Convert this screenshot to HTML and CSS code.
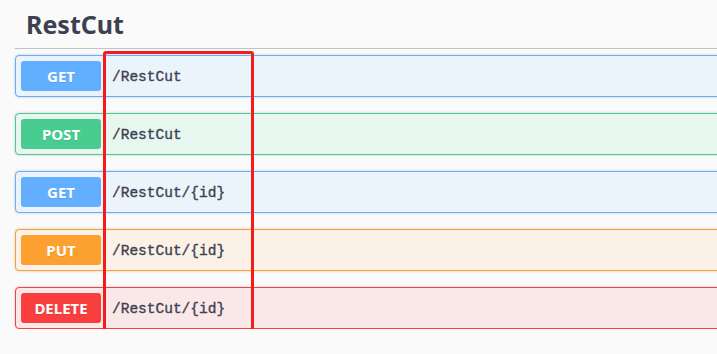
FILE: index.html
```html
<!DOCTYPE html>
<html lang="en">
<head>
  <meta charset="UTF-8">
  <meta name="viewport" content="width=device-width, initial-scale=1.0">
  <title>RestCut</title>
  <link rel="stylesheet" href="styles.css">
</head>
<body>
  <div class="swagger">
    <h3 class="tag">RestCut</h3>
    <div class="ops">
      <div class="op op-get">
        <span class="method">GET</span>
        <span class="path">/RestCut</span>
      </div>
      <div class="op op-post">
        <span class="method">POST</span>
        <span class="path">/RestCut</span>
      </div>
      <div class="op op-get">
        <span class="method">GET</span>
        <span class="path">/RestCut/{id}</span>
      </div>
      <div class="op op-put">
        <span class="method">PUT</span>
        <span class="path">/RestCut/{id}</span>
      </div>
      <div class="op op-delete">
        <span class="method">DELETE</span>
        <span class="path">/RestCut/{id}</span>
      </div>
    </div>

    <!-- highlight box -->
    <div class="highlight"></div>
  </div>
</body>
</html>
```

FILE: styles.css
```css
body {
  margin: 0;
  background: #fafafa;
  font-family: 'Noto Sans', 'Open Sans', sans-serif;
  color: #3b4151;
  overflow: hidden;
}
.swagger {
  position: relative;
  padding-left: 15px;
  width: 780px;
}
.tag {
  margin: 0;
  padding: 8px 0 8px 11px;
  font-size: 25px;
  line-height: 32px;
  font-weight: 700;
  border-bottom: 1px solid rgba(59, 65, 81, 0.3);
}
.ops {
  display: flex;
  flex-direction: column;
  gap: 16px;
  padding-top: 6px;
}
.op {
  display: flex;
  align-items: center;
  gap: 11px;
  padding: 5px;
  border: 1px solid;
  border-radius: 4px;
  box-shadow: 0 0 3px rgba(0, 0, 0, 0.19);
}
.method {
  width: 80px;
  height: 30px;
  line-height: 30px;
  border-radius: 3px;
  text-align: center;
  color: #fff;
  font-size: 15px;
  font-weight: 700;
  text-shadow: 0 1px 0 rgba(0, 0, 0, 0.1);
}
.path {
  padding-top: 2px;
  font-family: 'Liberation Mono', monospace;
  font-size: 14.5px;
  color: #3b4151;
  -webkit-text-stroke: 0.35px #3b4151;
}
.op-get { background: #ebf3fb; border-color: #61affe; }
.op-get .method { background: #61affe; }
.op-post { background: #e8f6f0; border-color: #49cc90; }
.op-post .method { background: #49cc90; }
.op-put { background: #fbf1e6; border-color: #fca130; }
.op-put .method { background: #fca130; }
.op-delete { background: #fae7e7; border-color: #f93e3e; }
.op-delete .method { background: #f93e3e; }

.highlight {
  position: absolute;
  left: 103px;
  top: 51px;
  width: 151px;
  height: 282px;
  box-sizing: border-box;
  border: 3px solid #f21c1c;
  border-radius: 3px;
}
```
